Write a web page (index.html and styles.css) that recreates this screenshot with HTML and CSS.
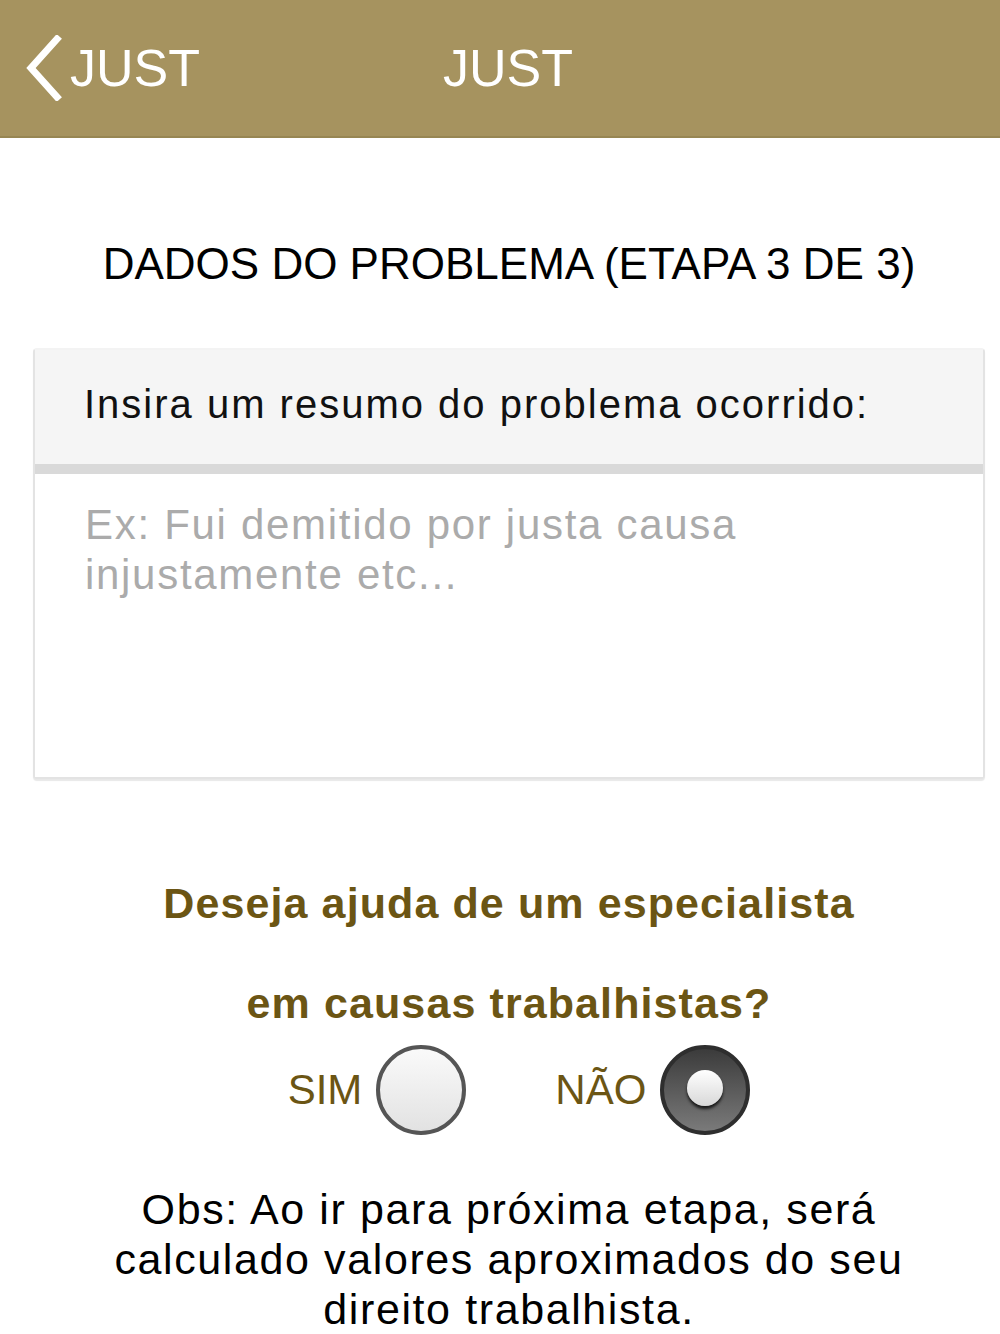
FILE: index.html
```html
<!doctype html>
<html lang="pt-BR">
  <head>
    <meta charset="UTF-8" />
    <title>JUST</title>
    <link rel="stylesheet" href="styles.css">
  </head>
  <body>
    <div class="nav-bar">
      <div class="nav-back">
        <svg class="back-icon" width="38" height="66" viewBox="0 0 38 66">
          <path d="M33 4 L7 33 L33 62" fill="none" stroke="#fff" stroke-width="7" stroke-linecap="square" />
        </svg>
        <span>JUST</span>
      </div>
      <div class="nav-title">JUST</div>
    </div>

    <div class="page">
      <h1 class="step-title">DADOS DO PROBLEMA (ETAPA 3 DE 3)</h1>

      <div class="summary-box">
        <div class="summary-label">Insira um resumo do problema ocorrido:</div>
        <textarea class="summary-input" placeholder="Ex: Fui demitido por justa causa injustamente etc..."></textarea>
      </div>

      <div class="question">
        <p>Deseja ajuda de um especialista</p>
        <p>em causas trabalhistas?</p>
      </div>

      <div class="choice-row">
        <label class="choice">
          <span>SIM</span>
          <span class="radio"></span>
        </label>
        <label class="choice">
          <span>NÃO</span>
          <span class="radio checked"><span class="radio-dot"></span></span>
        </label>
      </div>

      <p class="note">Obs: Ao ir para próxima etapa, será calculado valores aproximados do seu direito trabalhista.</p>
    </div>
  </body>
</html>
```

FILE: styles.css
```css
body {
  margin: 0;
  font-family: 'Liberation Sans', Arial, sans-serif;
  background-color: #fff;
  overflow: hidden;
}

.nav-bar {
  height: 136px;
  background-color: #a6935f;
  border-bottom: 2px solid #978653;
  display: flex;
  align-items: center;
  position: relative;
  color: #fff;
}

.nav-back {
  display: flex;
  align-items: center;
  padding-left: 24px;
  gap: 8px;
  font-size: 52px;
}

.back-icon {
  display: block;
}

.nav-title {
  position: absolute;
  left: 16px;
  right: 0;
  text-align: center;
  font-size: 52px;
  pointer-events: none;
}

.page {
  padding: 0 15px 0 33px;
}

.step-title {
  margin: 101px 0 0;
  font-size: 44px;
  font-weight: normal;
  text-align: center;
  color: #000;
  line-height: 50px;
}

.summary-box {
  margin-top: 59px;
  border: 2px solid #e3e3e3;
  border-top-color: #f3f3f3;
  border-radius: 4px;
  background-color: #fff;
  box-shadow: 0 2px 1px #e8e8e8;
}

.summary-label {
  background-color: #f5f5f5;
  border-bottom: 10px solid #d9d9d9;
  height: 124px;
  box-sizing: border-box;
  padding: 32px 0 0 49px;
  font-size: 40px;
  letter-spacing: 2px;
  color: #111;
}

.summary-input {
  display: block;
  width: 100%;
  height: 303px;
  box-sizing: border-box;
  border: none;
  resize: none;
  padding: 26px 50px;
  font-family: 'Liberation Sans', Arial, sans-serif;
  font-size: 42px;
  letter-spacing: 1.7px;
  line-height: 50px;
  outline: none;
}

.summary-input::placeholder {
  color: #ababab;
}

.question {
  margin-top: 74px;
  text-align: center;
  color: #6b5514;
  font-weight: bold;
  font-size: 43px;
  letter-spacing: 1.1px;
}

.question p {
  margin: 0;
  line-height: 100px;
}

.choice-row {
  display: flex;
  justify-content: center;
  gap: 89px;
  margin-top: -8px;
  padding-left: 20px;
}

.choice {
  display: flex;
  align-items: center;
  gap: 14px;
  font-size: 42px;
  color: #6b5514;
}

.radio {
  width: 90px;
  height: 90px;
  box-sizing: border-box;
  border-radius: 50%;
  border: 4px solid #555;
  background: linear-gradient(#fafafa, #e2e2e2);
  display: flex;
  align-items: center;
  justify-content: center;
}

.radio.checked {
  border-color: #2e2e2e;
  background: linear-gradient(#3b3b3b, #7a7a7a);
}

.radio-dot {
  width: 36px;
  height: 36px;
  margin-top: -4px;
  border-radius: 50%;
  background: linear-gradient(#fff, #d8d8d8);
  box-shadow: 0 3px 3px #1a1a1a;
}

.note {
  max-width: 840px;
  margin: 49px auto 0;
  text-align: center;
  font-size: 43px;
  letter-spacing: 1.6px;
  line-height: 50px;
  color: #000;
}
```
